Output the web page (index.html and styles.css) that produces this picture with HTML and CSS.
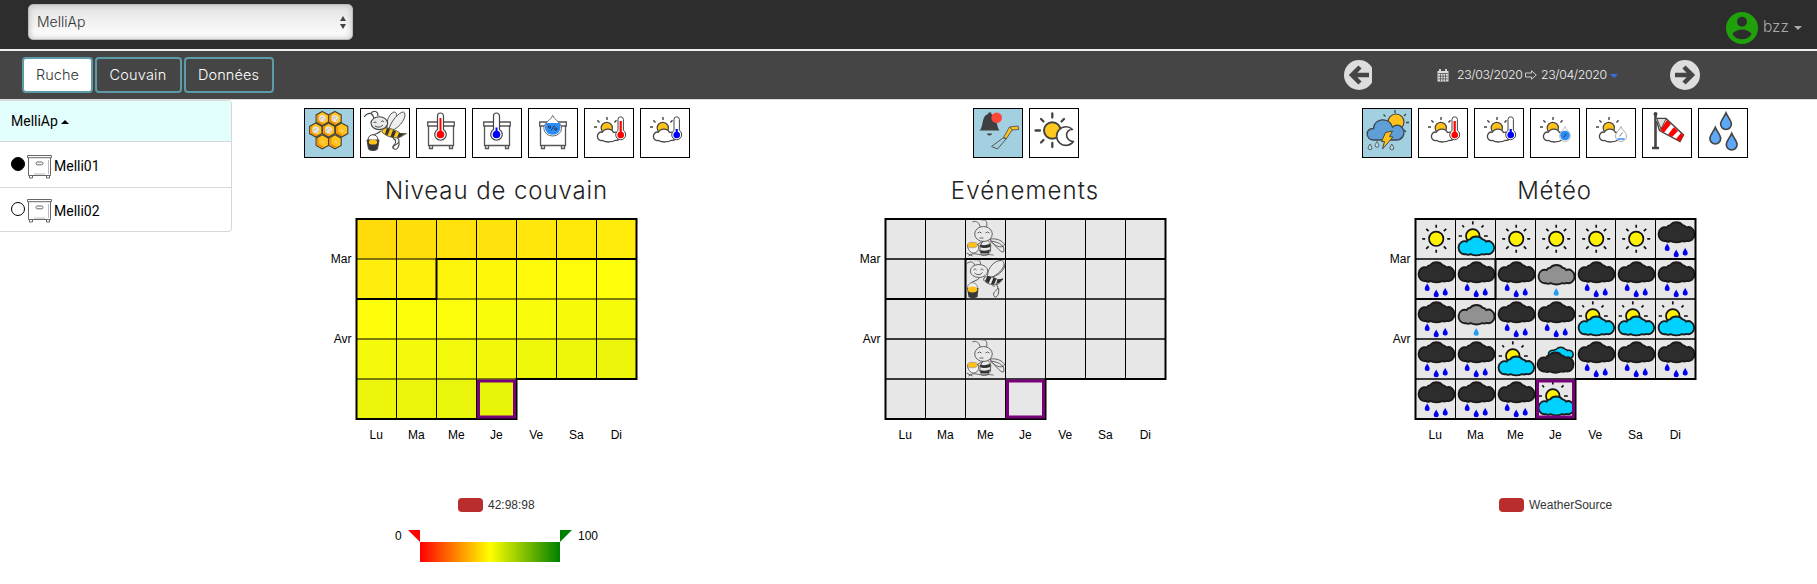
FILE: index.html
```html
<!DOCTYPE html>
<html lang="fr">
<head>
<meta charset="utf-8">
<title>MelliAp</title>
<link rel="stylesheet" href="styles.css">
</head>
<body>
<svg class="defs" aria-hidden="true">
  <defs>
    <linearGradient id="scale"><stop offset="0" stop-color="#f00"/><stop offset=".5" stop-color="#ff0"/><stop offset="1" stop-color="#008000"/></linearGradient>
    <path id="cloud" d="M7 19A6.2 6.2 0 1 1 8 7A4 4 0 0 1 11.5 5A7.5 6 0 0 1 24 5A4.5 4.5 0 0 1 27.5 7A6.2 6.2 0 1 1 28 18.8A6 6 0 0 1 23.5 19A9 4.5 0 0 1 12 19A6 6 0 0 1 7 19Z"/>
    <path id="drop" d="M0-4C.8-2 2.5-.5 2.5 1.2A2.5 2.5 0 0 1-2.5 1.2C-2.5-.5-.8-2 0-4Z"/>
    <path id="rays" d="M0-11v-3M0 11v3M11 0h3M-11 0h-3M7.6-7.6l2.4-2.4M-7.6-7.6l-2.4-2.4M7.6 7.6l2.4 2.4M-7.6 7.6l-2.4 2.4" fill="none" stroke="#111" stroke-width="1.7"/>
    <g id="w-sun"><circle cx="20.7" cy="19.8" r="7.2" fill="#fff200" stroke="#111" stroke-width="1.7"/><use href="#rays" x="20.7" y="19.8"/></g>
    <g id="w-mixed">
      <path d="M17.3 5.5V2.3M8.5 8.3L6.8 6.3M26 8.3l2-2M6.5 17H3.2M28.5 17h3.8" stroke="#111" stroke-width="1.7"/>
      <circle cx="17.3" cy="17" r="6.8" fill="#fff200" stroke="#111" stroke-width="1.7"/>
      <use href="#cloud" transform="translate(3.2 15.1) scale(.99 1.055)" fill="#00d2ff" stroke="#1c1c1c" stroke-width="1.8"/>
    </g>
    <g id="w-rain">
      <use href="#cloud" transform="translate(3.2 .7) scale(1 1.12)" fill="#2d2d2d" stroke="#1c1c1c" stroke-width="1.8"/>
      <g fill="#0000f5"><use href="#drop" x="11.7" y="28.3"/><use href="#drop" x="20.7" y="34.5"/><use href="#drop" x="29.7" y="32.8"/></g>
    </g>
    <g id="w-drizzle"><use href="#cloud" transform="translate(3.2 3.4) scale(1 1.09)" fill="#919191" stroke="#1c1c1c" stroke-width="1.8"/><use href="#drop" x="20.7" y="33" fill="#1e9ff2"/></g>
    <g id="w-cloudy">
      <use href="#cloud" transform="translate(13 6.8) scale(.69 .67)" fill="#00d2ff" stroke="#1c1c1c" stroke-width="2.2"/>
      <use href="#cloud" transform="translate(2.2 10.9) scale(1 1.13)" fill="#2d2d2d" stroke="#1c1c1c" stroke-width="1.8"/>
    </g>

    <symbol id="beeFly" viewBox="0 0 48 48">
      <g fill="#eee" stroke="#555" stroke-width="1">
        <path d="M26 19C25 11 29 4 33 3C37 3 37 10 28 20"/>
        <path d="M28 20C30 12 38 3 42.500 3C47 5 41 18 30 22Z"/>
      </g>
      <path d="M21 19C27 18 36 21 40 25L45.500 24.500L39.500 28C34 30.500 24 27 21 23Z" fill="#ffc21a" stroke="#555" stroke-width=".9"/>
      <path d="M26 19l3 1-2.500 6.500-2.500-1.500zM32 21l3 1.500-2.500 6-3-.7zM38 24l6 .5-5 3.500-3 .5z" fill="#333"/>
      <path d="M32 29l3 3M36 28.500c4 3 1 6-1 7-4 2-3 5-1 5s5-3 4-8M34 30c1 2 1 4-1 6s-2 4 1 4M20 22c-3 3-7 3-9 4.500" fill="none" stroke="#555" stroke-width="1.1"/>
      <path d="M13 9C11 3 7 3 3 8M17 7C17 2 13 1 10 4" fill="none" stroke="#444" stroke-width="1.1"/>
      <ellipse cx="18.3" cy="14.2" rx="8.3" ry="6.4" fill="#e9e9e9" stroke="#444" stroke-width="1.1"/>
      <path d="M12.5 14c1-1.4 2-1.4 3 0M20 13c1-1.4 2-1.4 3 0M14 17c3 2 6 1 8-1" fill="none" stroke="#333" stroke-width=".9"/>
      <path d="M7 31c0-7 10-7 10 0" fill="#fff" stroke="#444"/>
      <path d="M6 31h12l-1.5 9c-2 2-7 2-9 0z" fill="#383838" stroke="#444"/>
      <ellipse cx="12" cy="33" rx="4.2" ry="2.6" fill="#ffc21a"/>
    </symbol>
    <symbol id="beeCarry" viewBox="0 0 40 40">
      <g fill="#e9e9e9" stroke="#555" stroke-width=".9">
        <path d="M22 17C22 9 29 1 36 1.500C42 3 37 14 25 19Z"/>
        <path d="M26 18C33 17 40 10 39.500 5" fill="none"/>
        <path d="M9 6C8 2 4 2 1 5M15 5C15 1 12 0 9 1" fill="none"/>
        <path d="M19 18C25 17 30 19 33 21L37.500 20L33 25C28 27 21 25 18 21Z"/>
      </g>
      <path d="M22 17l4 1-3 6.500-3.500-2.500zM28 18.500l3 1.500-2.500 5.500-3-.5zM32 20.500l6-1-4 4-3.500 1.500z" fill="#2f2f2f"/>
      <path d="M26 25l3 3M30 25c4 3 2 5 0 7-3 2-2 6 0 6s4-4 3-9M14 19c-3 3-6 3-9 5" fill="none" stroke="#555"/>
      <ellipse cx="13.500" cy="12" rx="8.700" ry="6.500" fill="#e9e9e9" stroke="#555" stroke-width=".9"/>
      <path d="M8 11c1-1.300 2-1.300 3 0M15 11c1-1.300 2-1.300 3 0M9 14c3 2.500 6 2 8-.5" fill="none" stroke="#444" stroke-width=".9"/>
      <path d="M2 29c0-7 10-7 10 0" fill="#eee" stroke="#777" stroke-width=".8"/>
      <path d="M1.500 29h11.500l-1 9c-2 1.500-7 1.500-9 0z" fill="#383838"/>
      <ellipse cx="7" cy="30.500" rx="4.800" ry="3" fill="#ffc21a"/>
    </symbol>
    <symbol id="beeSit" viewBox="0 0 40 40">
      <g fill="#e9e9e9" stroke="#555" stroke-width=".9">
        <path d="M25 20C31 19 38 22 39 26C36 30 28 27 25 21ZM25 22C29 25 35 34 38 33C40 28 35 23 25 22"/>
        <path d="M7 3C11 1 14 4 15 9M16 1C21 0 22 3 21 8" fill="none"/>
        <path d="M17 23C13 28 14 35 17 36C22 37 26 34 25 29C26 25 24 21 20 21Z"/>
        <ellipse cx="18" cy="15" rx="8.8" ry="7.5"/>
      </g>
      <path d="M14.500 25.500c4 1.500 7 .5 10-1l.7 3.200c-4 1.800-8 1.800-11 0zM14 31c4 1 8 1 11-1l-2 4.500h-7z" fill="#333"/>
      <path d="M12 14l2-1 2 1M20 14l2-1 2 1M14 19h4M18 22L9 27M3 37c6-5 10 0 17-1s4 0 8 0M1 34l6 3" fill="none" stroke="#555" stroke-width=".9"/>
      <path d="M2 26h11c1 5-2 8-5 8s-6-4-6-8z" fill="#f4f4f4" stroke="#555" stroke-width=".9"/>
      <ellipse cx="7" cy="26" rx="5" ry="2.8" fill="#ffc21a" stroke="#777" stroke-width=".5"/>
    </symbol>
    <g id="cell"><path d="M0-7L6.2-3.6V3.6L0 7L-6.2 3.6V-3.6Z" fill="#ffc41c" stroke="#4a4130" stroke-width="1.1"/><path d="M-5.4-3V3.2L0 6.2L1.5 5L-3.6 1.8V-4Z" fill="#f5920a"/></g>
    <g id="brood"><use href="#cell"/><circle r="3.4" fill="#e8e4dc"/><path d="M-2 1a2 2 0 0 1 3-2M1 2l2-1" fill="none" stroke="#b9b2a4" stroke-width=".8"/></g>
    <symbol id="comb" viewBox="0 0 48 48">
      <use href="#brood" x="17.3" y="9.5"/><use href="#brood" x="30" y="9.5"/>
      <use href="#brood" x="10.8" y="21"/><use href="#brood" x="23.6" y="21"/><use href="#cell" x="36.6" y="21"/>
      <use href="#cell" x="17.3" y="32.8"/><use href="#cell" x="30" y="32.8"/>
      <path d="M36 21l2 1M17 32l2 2M30 32l2 2" stroke="#e8d9a0" stroke-width="1.5"/>
    </symbol>
    <g id="hiveBody" fill="#fff" stroke="#555" stroke-width="1.3"><path d="M12.5 36v3.5h3V36M32.5 36v3.5h3V36M11.5 17V36.5H36.5V17"/><path d="M10.7 13H37.3V17H10.7Z"/></g>
    <symbol id="hiveHot" viewBox="0 0 48 48"><use href="#hiveBody"/><path d="M20.5 7a3 3 0 0 1 6 0V20.500a5.800 5.800 0 1 1-6 0Z" fill="#fff" stroke="#444" stroke-width="1.2"/><path d="M23.500 9V24" stroke="red" stroke-width="2"/><circle cx="23.500" cy="25.500" r="3.800" fill="red"/></symbol>
    <symbol id="hiveCold" viewBox="0 0 48 48"><use href="#hiveBody"/><path d="M20.500 7a3 3 0 0 1 6 0V20.500a5.800 5.800 0 1 1-6 0Z" fill="#fff" stroke="#444" stroke-width="1.2"/><path d="M23.500 18.500V24" stroke="#00f" stroke-width="2"/><circle cx="23.500" cy="25.500" r="3.800" fill="#00f"/></symbol>
    <symbol id="hiveWet" viewBox="0 0 48 48"><use href="#hiveBody"/><path d="M23.700 6.500C25.500 11 33 14 32.500 19.500A8.800 7.500 0 0 1 14.900 19.500C14.500 14 22 11 23.700 6.500Z" fill="#fff" stroke="#666"/><path d="M17 14H30.500C33.500 21 29 25.800 23.700 25.800S14 21 17 14Z" fill="#2b8df5"/><path d="M22 21.500l3.500-5" stroke="#235" /><circle cx="20.500" cy="18" r="1.200" fill="none" stroke="#235"/><circle cx="26.800" cy="20" r="1.200" fill="none" stroke="#235"/></symbol>
    <g id="fair">
      <path d="M22 11V8M14.500 13.500l-2.200-2.200M29.500 13.500l2-2.200M12 18H9" stroke="#444" stroke-width="1.400"/>
      <circle cx="21.800" cy="19" r="5.600" fill="#ffc21a" stroke="#444" stroke-width="1.200"/>
      <path d="M17.500 31.500C11 32.500 10.500 22.500 17.500 23C19 19.500 26.500 18.500 28.500 23.500C37 21 38 32 30.500 31.300C27 33.500 21 33.500 17.500 31.500Z" fill="#fff" stroke="#444" stroke-width="1.300"/>
    </g>
    <symbol id="airHot" viewBox="0 0 48 48"><use href="#fair"/><path d="M33 10.500a2.700 2.700 0 0 1 5.400 0V21.500a5 5 0 1 1-5.400 0Z" fill="#fff" stroke="#444"/><path d="M35.700 12V25" stroke="red" stroke-width="2.200"/><circle cx="35.700" cy="26" r="3.300" fill="red"/></symbol>
    <symbol id="airCold" viewBox="0 0 48 48"><use href="#fair"/><path d="M33 10.500a2.700 2.700 0 0 1 5.400 0V21.500a5 5 0 1 1-5.400 0Z" fill="#fff" stroke="#444"/><path d="M35.700 20V25" stroke="#00f" stroke-width="2.200"/><circle cx="35.700" cy="26" r="3.300" fill="#00f"/></symbol>
    <symbol id="airWet" viewBox="0 0 48 48"><use href="#fair"/><path d="M34 17.500C35 21 39.500 23 39.500 27A5.500 5.500 0 0 1 28.500 27C28.500 23 33 21 34 17.500Z" fill="#fff" stroke="#aaa" stroke-width=".7"/><circle cx="34" cy="26.500" r="4.800" fill="#2b8df5"/><path d="M32.500 28.500l3-4" stroke="#235" stroke-width=".9"/></symbol>
    <symbol id="airDew" viewBox="0 0 48 48"><use href="#fair"/><path d="M34 17.500C35 21 39.500 23 39.500 27A5.500 5.500 0 0 1 28.500 27C28.500 23 33 21 34 17.500Z" fill="#fff" stroke="#888" stroke-width=".7"/><path d="M30.500 30h7" stroke="#2b8df5" stroke-width="1.500"/><path d="M32.500 27.500l3-4" stroke="#678" stroke-width=".9"/></symbol>
    <symbol id="bell" viewBox="0 0 48 48">
      <path d="M5.500 21.500C9 19 8 10 11 7C12.500 5.500 13.500 5.300 14.300 5V3.500h3V5C24 7 22 18 25.500 21.500ZM13 24.500h5a2.500 2 0 0 1-5 0Z" fill="#3f3f3f"/>
      <circle cx="22.700" cy="8.700" r="5.300" fill="#ff453a"/>
      <path d="M29.500 28.500L35.500 18L44 17L44.800 20.500L38 21L32.500 29.500Z" fill="#ffc21a" stroke="#555" stroke-width=".9"/>
      <path d="M29 29L17.500 37.500L23.500 40L32.500 29.500ZM35.500 18l3 3" fill="none" stroke="#555"/>
    </symbol>
    <symbol id="dayNight" viewBox="0 0 48 48">
      <path d="M22.300 4.500v4M22.300 34v4M5.500 21.500h4.500M11 10l2.500 2.500M34 10l-2.500 2.500M11 33.500l2.500-2.500" stroke="#444" stroke-width="2.300" stroke-linecap="round"/>
      <circle cx="22.300" cy="21.500" r="8.300" fill="#ffc91f" stroke="#444" stroke-width="2"/>
      <path d="M43.500 32.500A9.300 9.300 0 1 1 42.500 20.500C34.500 20 34.500 32 43.500 32.500Z" fill="#fff" stroke="#444" stroke-width="1.600" stroke-linejoin="round"/>
    </symbol>
    <symbol id="storm" viewBox="0 0 48 48">
      <path d="M32 4V1M22.500 7.500l-2-2M41 7l2-2M43 13.500h3M41 21l2 2" stroke="#444" stroke-width="1.300"/>
      <circle cx="33" cy="13" r="8" fill="#ffc21a" stroke="#444" stroke-width="1.200"/>
      <path d="M11 31C2 31 2 19 10.500 19.500C11.500 9 26 7.500 29.500 18C37 12 44 22 39.500 28C37 31.500 35 31 32 31Z" fill="#5f9fd8" stroke="#3c4650" stroke-width="1.400"/>
      <path d="M22.500 23.500L29.500 22L26.500 27.500L30 28L19.500 40L21.500 32.500H18.500Z" fill="#ffc21a" stroke="#444"/>
      <g fill="#b9dcea" stroke="#444" stroke-width="1.100"><use href="#drop" transform="translate(7 38) scale(.75)"/><use href="#drop" transform="translate(14 35.500) scale(.75)"/><use href="#drop" transform="translate(28.800 38) scale(.75)"/></g>
    </symbol>
    <symbol id="windsock" viewBox="0 0 48 48">
      <path d="M12.500 5V38.500M9 39h7" stroke="#444" stroke-width="2.600"/><circle cx="12.500" cy="5" r="2" fill="#444"/>
      <path d="M13.500 9.500H23L40.500 26L37 32.500L16.500 21.500L13.500 12" fill="#fff" stroke="#444" stroke-width="1.400"/>
      <path d="M24 11L17 21l4 2.500L28 15zM31 18l-6 7.500 4 2.500 6-6zM38 24l-5 6 4 2.500 3.500-6z" fill="red"/>
      <path d="M14 10l4 10 5-10" fill="#ddd" stroke="#444"/>
    </symbol>
    <symbol id="drops" viewBox="0 0 48 48"><g fill="#5fa8f5" stroke="#444" stroke-width=".75">
      <use href="#drop" transform="translate(27 12.500) scale(2.150)"/><use href="#drop" transform="translate(16.300 27) scale(2.150)"/><use href="#drop" transform="translate(32.700 33) scale(2.150)"/></g>
    </symbol>
    <symbol id="hive" viewBox="0 0 25 25"><g fill="#fff" stroke="#666"><path d="M2.500 21v3h3v-3M19.500 21v3h3v-3M1.500 3.500V21.500H23.500V3.500"/><path d="M.5 1.500H24.500V3.700H.5Z"/><rect x="9" y="8" width="7" height="2.800" rx="1.400"/><path d="M7 20h11M21.500 6v14" stroke="#bbb"/></g></symbol>
  </defs>
</svg>

<header class="topbar">
  <div class="apiary-select"><span>MelliAp</span><svg width="6" height="13" viewBox="0 0 6 13"><path d="M3 0L6 5H0ZM3 13L0 8H6Z" fill="#444"/></svg></div>
  <div class="user">
    <svg width="32" height="32" viewBox="0 0 32 32"><circle cx="16" cy="16" r="16" fill="#20a00b"/><circle cx="16" cy="9.700" r="5" fill="#2d2d2d"/><path d="M6.400 22C10 16 22 16 25.600 22C22 29 10 29 6.400 22Z" fill="#2d2d2d"/></svg>
    <span class="user-name">bzz</span><i class="caret"></i>
  </div>
</header>

<nav class="toolbar">
  <div class="tabs"><a class="tab tab-ruche active">Ruche</a><a class="tab tab-couvain">Couvain</a><a class="tab tab-donnees">Données</a></div>
  <div class="period">
    <svg class="prev" width="28" height="30" viewBox="0 0 28 30"><circle cx="15" cy="15" r="15" fill="#ddd"/><path d="M16 7L8 15L16 23M8.500 15H25" fill="none" stroke="#454545" stroke-width="4.500"/></svg>
    <div class="dates">
      <svg width="12" height="13" viewBox="0 0 12 13"><path d="M.5 2H11.500V12.500H.5Z" fill="#ddd"/><path d="M3 0v3M9 0v3" stroke="#ddd" stroke-width="1.800"/><path d="M1 4.500H11M1 7.200H11M1 9.900H11M3.500 4.500V12M6 4.500V12M8.500 4.500V12" stroke="#454545" stroke-width=".7"/></svg>
      <span class="date">23/03/2020</span>
      <svg class="to" width="12" height="10" viewBox="0 0 12 10"><path d="M.5 3H6.500V.8L11.300 5L6.500 9.200V7H.5Z" fill="none" stroke="#ccc"/></svg>
      <span class="date">23/04/2020</span><i class="caret blue"></i>
    </div>
    <svg class="next" width="30" height="30" viewBox="0 0 30 30"><circle cx="15" cy="15" r="15" fill="#ddd"/><path d="M14 7L22 15L14 23M21.500 15H5" fill="none" stroke="#454545" stroke-width="4.500"/></svg>
  </div>
</nav>

<main class="content">
  <aside class="hives">
    <div class="hives-head">MelliAp<i class="caret up"></i></div>
    <div class="hive-row"><i class="dot on"></i><svg width="25" height="25"><use href="#hive"/></svg><span>Melli01</span></div>
    <div class="hive-row"><i class="dot"></i><svg width="25" height="25"><use href="#hive"/></svg><span>Melli02</span></div>
  </aside>
  <section class="panel">
    <div class="icons" data-icons="comb beeFly hiveHot hiveCold hiveWet airHot airCold"></div>
    <h2 class="title t-brood">Niveau de couvain</h2>
    <svg class="chart" data-kind="brood" width="529" height="380"></svg>
  </section>
  <section class="panel">
    <div class="icons" data-icons="bell dayNight"></div>
    <h2 class="title t-events">Evénements</h2>
    <svg class="chart" data-kind="events" width="529" height="380"></svg>
  </section>
  <section class="panel panel-weather">
    <div class="icons" data-icons="storm airHot airCold airWet airDew windsock drops"></div>
    <h2 class="title t-weather">Météo</h2>
    <svg class="chart" data-kind="weather" width="529" height="380"></svg>
  </section>
</main>
<script src="app.js"></script>
</body>
</html>
```
FILE: styles.css
```css
* { box-sizing: border-box; }
body { margin: 0; background: #fff; color: #000; font-family: Inter, "Open Sans", sans-serif; height: 584px; overflow: hidden; }
.defs { position: absolute; width: 0; height: 0; }

.topbar { height: 51px; background: #2d2d2d; border-bottom: 2px solid #f0eeee; display: flex; justify-content: space-between; padding: 4px 15px 0 28px; }
.apiary-select { width: 325px; height: 36px; border-radius: 5px; border: 1px solid #bbb; background: linear-gradient(#e2e2e2, #fff); box-shadow: inset 0 0 6px #bbb; display: flex; align-items: center; justify-content: space-between; padding: 0 6px 2px 8px; font-size: 14px; font-weight: 300; color: #333; }
.apiary-select svg { margin-top: 3px; }
.user { display: flex; align-items: center; height: 32px; margin-top: 8px; }
.user-name { font-size: 15.500px; font-weight: 300; color: #aaa; margin: -3px 6px 0 5px; width: 25px; }
.caret { display: inline-block; border: 4px solid transparent; border-top-color: #aaa; border-bottom-width: 0; }
.caret.blue { border-top-color: #3b6fe0; margin: 1px 0 0 3px; }
.caret.up { border-top-width: 0; border-bottom: 4px solid #000; margin: 1px 0 0 3px; }

.toolbar { height: 49px; background: #454545; border-bottom: 1px solid #ddd; display: flex; justify-content: space-between; padding: 6px 117px 0 22px; }
.tabs { display: flex; gap: 2px; }
.tab { height: 36px; border: 2px solid #5e9ba8; border-radius: 4px; color: #fff; font-size: 14.500px; font-weight: 300; line-height: 31px; text-align: center; }
.tab-ruche { width: 71px; }
.tab-couvain { width: 87px; letter-spacing: .2px; padding-right: 1px; }
.tab-donnees { width: 90px; letter-spacing: .1px; padding-right: 1px; }
.tab.active { background: #fff; color: #333; }
.period { display: flex; align-items: center; height: 36px; }
.dates { width: 298px; padding-left: 65px; display: flex; align-items: center; font-size: 12.300px; font-weight: 300; color: #f2f2f2; }
.date { width: 66px; margin-top: -2px; white-space: nowrap; letter-spacing: -.35px; }
.dates svg:first-child { margin-right: 8px; }
.to { margin: 0 4px 0 2px; }

.content { display: grid; grid-template-columns: 232px 529px 530px 529px; }
.hives { height: 132px; border: 1px solid #d8d8d8; border-left: 0; border-radius: 0 4px 4px 0; font-family: Roboto, sans-serif; font-size: 14px; overflow: hidden; }
.hives-head { height: 41px; background: #e2fffe; border-bottom: 1px solid #d4d4d4; padding-left: 11px; display: flex; align-items: center; }
.hive-row { height: 45px; display: flex; align-items: center; padding: 3px 0 0 11px; }
.hive-row + .hive-row { border-top: 1px solid #d8d8d8; padding-top: 1px; }
.dot { width: 14px; height: 14px; border: 1px solid #000; border-radius: 50%; margin: -4px 2px 0 0; }
.dot.on { background: #000; }
.hive-row span { margin-left: 2px; }

.panel { padding-top: 8px; }
.icons { display: flex; gap: 6px; justify-content: center; }
.panel-weather .icons, .panel-weather .title { margin-right: 2px; }
.icon { width: 50px; height: 50px; border: 1px solid #000; background: #fff; }
.icon.active { background: #a3d0e1; }
.icon svg { display: block; width: 48px; height: 48px; }
.title { margin: 16px 0 0; height: 30px; line-height: 34px; text-align: center; font-size: 24px; font-weight: 300; color: #222; white-space: nowrap; }
.t-brood { letter-spacing: .9px; }
.t-events { letter-spacing: 1.1px; padding-right: 2px; }
.t-weather { letter-spacing: .8px; }
.chart { display: block; font: 12px "Liberation Sans", Arial, sans-serif; }
.legend { fill: #333; }
```
FILE: app.js
```js
const SIZE = 40, X0 = 124.5, Y0 = 15;
const DAYS = ['Lu', 'Ma', 'Me', 'Je', 'Ve', 'Sa', 'Di'];
const WEATHER = ['sun', 'mixed', 'sun', 'sun', 'sun', 'sun', 'rain',
  'rain', 'rain', 'rain', 'drizzle', 'rain', 'rain', 'rain',
  'rain', 'drizzle', 'rain', 'rain', 'mixed', 'mixed', 'mixed',
  'rain', 'rain', 'mixed', 'cloudy', 'rain', 'rain', 'rain',
  'rain', 'rain', 'rain', 'mixed'];
const EVENTS = { 2: 'beeSit', 9: 'beeCarry', 23: 'beeSit' };

function broodColor(i) {
  const mix = (a, b, t) => a.map((v, k) => Math.round(v + (b[k] - v) * t));
  const c = i < 13 ? mix([255, 219, 12], [255, 255, 10], i / 13)
    : mix([255, 255, 10], [232, 244, 10], (i - 13) / 18);
  return `rgb(${c})`;
}

function legend(x, label) {
  return `<rect x="${x}" y="294" width="25" height="14" rx="4" fill="#b92e2c"/>
    <text class="legend" x="${x + 30}" y="305">${label}</text>`;
}

function draw(kind) {
  let cells = '', art = '';
  for (let i = 0; i < 32; i++) {
    const x = X0 + (i % 7) * SIZE, y = Y0 + Math.floor(i / 7) * SIZE;
    const fill = kind === 'brood' ? broodColor(i) : '#e7e7e7';
    cells += `<rect x="${x}" y="${y}" width="40" height="40" fill="${fill}" shape-rendering="crispEdges"/>`;
    if (kind === 'weather') art += `<use href="#w-${WEATHER[i]}" x="${x}" y="${y}"/>`;
    if (kind === 'events' && EVENTS[i]) art += `<use href="#${EVENTS[i]}" x="${x}" y="${y}" width="40" height="40"/>`;
  }
  const p = (c, r) => `${X0 + c * SIZE} ${Y0 + r * SIZE}`;
  let inner = '';
  for (let c = 1; c < 7; c++) inner += `<path d="M${p(c, 0)}L${p(c, c < 4 ? 5 : 4)}" stroke="#000"/>`;
  for (let r = 1; r < 5; r++) inner += `<path d="M${p(0, r)}L${p(7, r)}" stroke="#000" stroke-width="${kind === 'brood' ? 1 : 1.4}"/>`;
  const lines = `<path d="M${p(0, 0)}L${p(7, 0)}L${p(7, 4)}L${p(4, 4)}L${p(4, 5)}L${p(0, 5)}ZM${p(0, 2)}L${p(2, 2)}L${p(2, 1)}L${p(7, 1)}" fill="none" stroke="#000" stroke-width="2"/>`;
  const today = `<rect x="${X0 + 122}" y="${Y0 + 162}" width="36" height="36" fill="none" stroke="#780078" stroke-width="3"/>`;
  let labels = `<text x="${X0 - 5}" y="59" text-anchor="end">Mar</text><text x="${X0 - 5}" y="139" text-anchor="end">Avr</text>`;
  DAYS.forEach((d, i) => { labels += `<text x="${X0 + 19.8 + i * SIZE}" y="235" text-anchor="middle">${d}</text>`; });
  let foot = '';
  if (kind === 'brood') {
    foot = legend(226, '42:98:98') + `<rect x="188" y="338" width="140" height="20" fill="url(#scale)"/>
      <path d="M176 326h12v12z" fill="red"/><path d="M340 326h-12v12z" fill="green"/>
      <text x="163" y="336">0</text><text x="346" y="336">100</text>`;
  }
  if (kind === 'weather') foot = legend(208, 'WeatherSource');
  return cells + inner + art + lines + today + labels + foot;
}

document.querySelectorAll('.icons').forEach(row => {
  row.innerHTML = row.dataset.icons.split(' ').map((id, i) =>
    `<div class="icon${i ? '' : ' active'}"><svg><use href="#${id}"/></svg></div>`).join('');
});
document.querySelectorAll('.chart').forEach(svg => { svg.innerHTML = draw(svg.dataset.kind); });
```
